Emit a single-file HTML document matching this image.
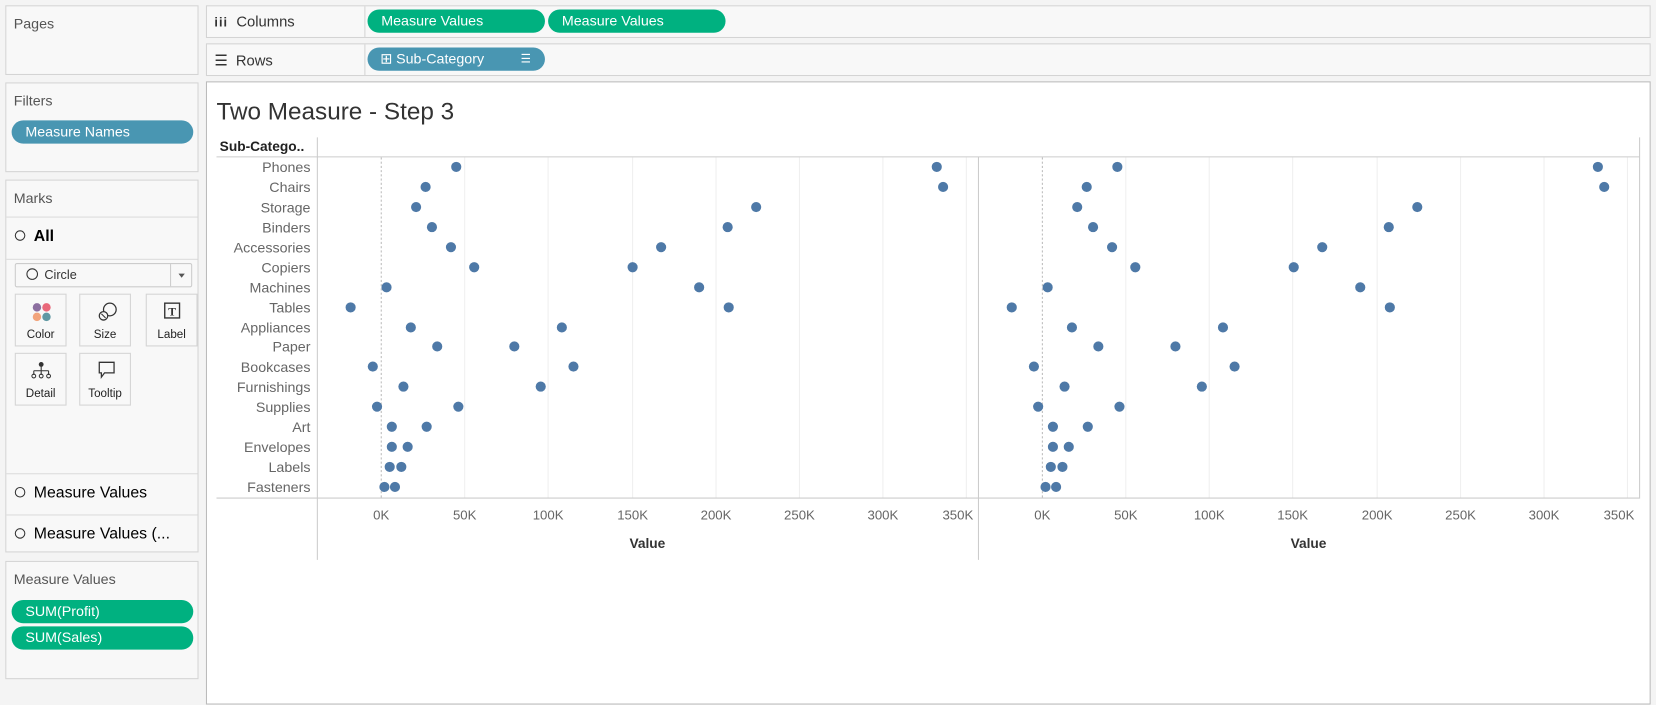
<!DOCTYPE html>
<html><head><meta charset="utf-8"><style>
html,body{margin:0;padding:0;width:1656px;height:694px;overflow:hidden;background:#f4f4f4;font-family:"Liberation Sans",sans-serif;}
#w{position:absolute;left:0;top:0;width:1568px;height:657px;transform:scale(1.0561,1.0563);transform-origin:0 0;}
.box{position:absolute;background:#f8f8f8;border:1px solid #d4d4d4;box-sizing:border-box;}
.t{position:absolute;font-size:13.5px;color:#333;}
.pill{position:absolute;height:22px;border-radius:11px;color:#fff;font-size:13.5px;line-height:22px;box-sizing:border-box;padding-left:13px;}
.g{background:#00b180}.b{background:#4996b2}
.btn{position:absolute;width:49px;height:50px;border:1px solid #d4d4d4;box-sizing:border-box;background:#f8f8f8;font-size:11px;text-align:center;color:#222}
.btn span{position:absolute;left:0;right:0;top:32px}
.circ{display:inline-block;width:10px;height:10px;border:1.5px solid #333;border-radius:50%;box-sizing:border-box;}
.sep{position:absolute;left:0;right:0;height:1px;background:#dcdcdc}
</style></head><body><div id="w">
<div class="box" style="left:5px;top:5px;width:183px;height:66px"><div class="t" style="left:7px;top:9px;color:#555">Pages</div></div>
<div class="box" style="left:5px;top:78px;width:183px;height:85px"><div class="t" style="left:7px;top:9px;color:#555">Filters</div>
<div class="pill b" style="left:5px;top:35px;width:172px">Measure Names</div></div>
<div class="box" style="left:5px;top:170px;width:183px;height:353px">
<div class="t" style="left:7px;top:9px;color:#555">Marks</div>
<div class="sep" style="top:34px"></div>
<div class="t" style="left:8px;top:44px;font-size:15px;font-weight:bold;color:#000"><span class="circ" style="margin-right:8px"></span>All</div>
<div class="sep" style="top:74px"></div>
<div style="position:absolute;left:8px;top:78px;width:168px;height:23px;border:1px solid #ccc;box-sizing:border-box;background:#f8f8f8;border-radius:2px">
<div class="t" style="left:10px;top:3px;font-size:12px"><span class="circ" style="width:11px;height:11px;margin-right:6px;vertical-align:-1px"></span>Circle</div>
<div style="position:absolute;left:146px;top:0;bottom:0;width:1px;background:#ccc"></div>
<div style="position:absolute;left:154px;top:9px;border:3.5px solid transparent;border-top:4px solid #555"></div></div>
<div class="btn" style="left:8px;top:107px"><svg width="49" height="30" style="position:absolute;left:0;top:0"><circle cx="20" cy="12" r="4" fill="#8c6fa0"/><circle cx="29" cy="12" r="4" fill="#e9687a"/><circle cx="20" cy="21" r="4" fill="#f2a47c"/><circle cx="29" cy="21" r="4" fill="#5f98a3"/></svg><span>Color</span></div>
<div class="btn" style="left:69px;top:107px"><svg width="49" height="30" style="position:absolute;left:0;top:0"><circle cx="28" cy="14" r="6" fill="none" stroke="#333" stroke-width="1.2"/><circle cx="22" cy="20" r="4" fill="#f8f8f8" stroke="#333" stroke-width="1.2"/><line x1="20" y1="18" x2="24" y2="22" stroke="#333"/></svg><span>Size</span></div>
<div class="btn" style="left:132px;top:107px"><svg width="49" height="30" style="position:absolute;left:0;top:0"><rect x="17" y="8" width="14" height="14" fill="none" stroke="#333" stroke-width="1.3"/><text x="24" y="19.5" font-size="11" font-family="Liberation Serif" font-weight="bold" text-anchor="middle" fill="#333">T</text></svg><span>Label</span></div>
<div class="btn" style="left:8px;top:163px"><svg width="49" height="30" style="position:absolute;left:0;top:0"><circle cx="24" cy="10" r="2.3" fill="#333"/><path d="M24 10V16M17 16H31M17 16V20M24 16V20M31 16V20" stroke="#333" stroke-width="1"/><circle cx="17" cy="21" r="1.8" fill="none" stroke="#333"/><circle cx="24" cy="21" r="1.8" fill="none" stroke="#333"/><circle cx="31" cy="21" r="1.8" fill="none" stroke="#333"/></svg><span>Detail</span></div>
<div class="btn" style="left:69px;top:163px"><svg width="49" height="30" style="position:absolute;left:0;top:0"><path d="M18 8H32V18H23L20 22V18H18Z" fill="none" stroke="#333" stroke-width="1.2"/></svg><span>Tooltip</span></div>
<div class="sep" style="top:277px"></div>
<div class="t" style="left:8px;top:287px;font-size:15px;color:#000"><span class="circ" style="margin-right:8px"></span>Measure Values</div>
<div class="sep" style="top:316px"></div>
<div class="t" style="left:8px;top:326px;font-size:15px;color:#000"><span class="circ" style="margin-right:8px"></span>Measure Values (...</div>
</div>
<div class="box" style="left:5px;top:531px;width:183px;height:112px"><div class="t" style="left:7px;top:9px;color:#555">Measure Values</div>
<div class="pill g" style="left:5px;top:36px;width:172px">SUM(Profit)</div>
<div class="pill g" style="left:5px;top:61px;width:172px">SUM(Sales)</div></div>

<div class="box" style="left:195px;top:5px;width:1368px;height:31px"><div style="position:absolute;left:149px;top:0;bottom:0;width:1px;background:#d4d4d4"></div>
<div class="t" style="left:7px;top:6px;font-size:14px"><b style="font-size:12px;letter-spacing:1px">iii</b>&nbsp; Columns</div>
<div class="pill g" style="left:152px;top:3px;width:168px">Measure Values</div>
<div class="pill g" style="left:323px;top:3px;width:168px">Measure Values</div></div>
<div class="box" style="left:195px;top:41px;width:1368px;height:31px"><div style="position:absolute;left:149px;top:0;bottom:0;width:1px;background:#d4d4d4"></div>
<div class="t" style="left:7px;top:7px;font-size:14px">☰&nbsp; Rows</div>
<div class="pill b" style="left:152px;top:3px;width:168px;padding-left:12px">⊞ Sub-Category<span style="position:absolute;left:145px;font-size:11px">&#9776;</span></div></div>

<div style="position:absolute;left:195px;top:77px;width:1368px;height:590px;background:#fff;border:1px solid #bbb;box-sizing:border-box"></div>
<div class="t" style="left:205px;top:92px;font-size:23px;color:#333;font-weight:300">Two Measure - Step 3</div>
<svg width="1568" height="657" style="position:absolute;left:0;top:0" font-family="Liberation Sans">
<text x="208" y="143" font-size="13" font-weight="bold" fill="#222">Sub-Catego..</text>
<g stroke="#efefef"><path d="M440 149V471M519 149V471M599 149V471M678 149V471M757 149V471M836 149V471M915 149V471M1066 149V471M1145 149V471M1224 149V471M1304 149V471M1383 149V471M1462 149V471M1541 149V471"/></g>
<g stroke="#bbb" stroke-dasharray="2,2"><path d="M361 149V471M987 149V471"/></g>
<g stroke="#ccc"><path d="M205 148.5H1553M205 471.5H1553M300.5 130V530M926.5 149V530M1552.5 130V471"/></g>
<g font-size="13.5" fill="#666" text-anchor="end" id="labs"></g>
<g font-size="12.5" fill="#666" text-anchor="middle">
<text x="361" y="492">0K</text><text x="440" y="492">50K</text><text x="519" y="492">100K</text><text x="599" y="492">150K</text><text x="678" y="492">200K</text><text x="757" y="492">250K</text><text x="836" y="492">300K</text><text x="907" y="492">350K</text>
<text x="987" y="492">0K</text><text x="1066" y="492">50K</text><text x="1145" y="492">100K</text><text x="1224" y="492">150K</text><text x="1304" y="492">200K</text><text x="1383" y="492">250K</text><text x="1462" y="492">300K</text><text x="1533" y="492">350K</text></g>
<text x="613" y="519" font-size="13" font-weight="bold" fill="#333" text-anchor="middle">Value</text>
<text x="1239" y="519" font-size="13" font-weight="bold" fill="#333" text-anchor="middle">Value</text>
<g font-size="13.5" fill="#666" text-anchor="end">
<text x="294" y="163">Phones</text><text x="294" y="182">Chairs</text><text x="294" y="201">Storage</text><text x="294" y="220">Binders</text><text x="294" y="239">Accessories</text><text x="294" y="258">Copiers</text><text x="294" y="277">Machines</text><text x="294" y="296">Tables</text><text x="294" y="315">Appliances</text><text x="294" y="333">Paper</text><text x="294" y="352">Bookcases</text><text x="294" y="371">Furnishings</text><text x="294" y="390">Supplies</text><text x="294" y="409">Art</text><text x="294" y="428">Envelopes</text><text x="294" y="447">Labels</text><text x="294" y="466">Fasteners</text></g>
<g fill="#4e79a7" id="d">
<circle cx="432" cy="158" r="4.8"/><circle cx="887" cy="158" r="4.8"/>
<circle cx="403" cy="177" r="4.8"/><circle cx="893" cy="177" r="4.8"/>
<circle cx="394" cy="196" r="4.8"/><circle cx="716" cy="196" r="4.8"/>
<circle cx="409" cy="215" r="4.8"/><circle cx="689" cy="215" r="4.8"/>
<circle cx="427" cy="234" r="4.8"/><circle cx="626" cy="234" r="4.8"/>
<circle cx="449" cy="253" r="4.8"/><circle cx="599" cy="253" r="4.8"/>
<circle cx="366" cy="272" r="4.8"/><circle cx="662" cy="272" r="4.8"/>
<circle cx="332" cy="291" r="4.8"/><circle cx="690" cy="291" r="4.8"/>
<circle cx="389" cy="310" r="4.8"/><circle cx="532" cy="310" r="4.8"/>
<circle cx="414" cy="328" r="4.8"/><circle cx="487" cy="328" r="4.8"/>
<circle cx="353" cy="347" r="4.8"/><circle cx="543" cy="347" r="4.8"/>
<circle cx="382" cy="366" r="4.8"/><circle cx="512" cy="366" r="4.8"/>
<circle cx="357" cy="385" r="4.8"/><circle cx="434" cy="385" r="4.8"/>
<circle cx="371" cy="404" r="4.8"/><circle cx="404" cy="404" r="4.8"/>
<circle cx="371" cy="423" r="4.8"/><circle cx="386" cy="423" r="4.8"/>
<circle cx="369" cy="442" r="4.8"/><circle cx="380" cy="442" r="4.8"/>
<circle cx="364" cy="461" r="4.8"/><circle cx="374" cy="461" r="4.8"/>
</g>
<use href="#d" x="626"/>
</svg>
</div></body></html>
